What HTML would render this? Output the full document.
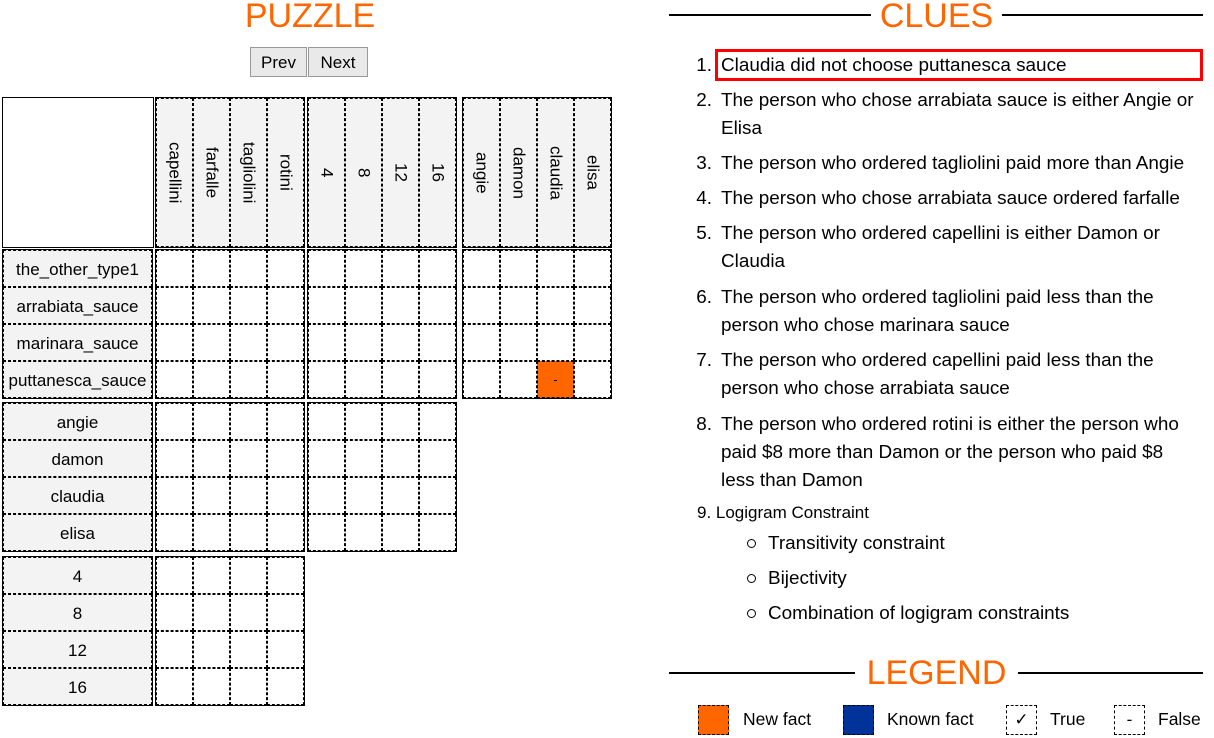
<!DOCTYPE html>
<html><head><meta charset="utf-8"><style>
*{box-sizing:border-box;margin:0;padding:0}
body{width:1214px;height:738px;background:#fff;font-family:"Liberation Sans",sans-serif;color:#000;position:relative;overflow:hidden}
.a{position:absolute}
.h{color:#ff6600;font-size:34px;text-align:center}
.blk{position:absolute;border:1px solid #000;display:flex;flex-wrap:wrap;width:150px;height:150px}
.blk i{display:block;width:37px;height:37px;border:1px dashed #000;font-style:normal;text-align:center;line-height:35px;font-size:13px}
.lbl{position:absolute;border:1px solid #000;width:151px;height:150px}
.lbl div{height:37px;border:1px dashed #000;background:#f3f3f3;text-align:center;line-height:37px;font-size:17px}
.hd{position:absolute;border:1px solid #000;width:150px;height:151px;display:flex}
.hd div{width:37px;height:149px;border:1px dashed #000;background:#f3f3f3;writing-mode:vertical-rl;display:flex;align-items:center;justify-content:center;font-size:17px}
.btn{position:absolute;top:47px;height:30px;border:1px solid #999;background:#e9e9e9;font-size:17px;line-height:30px;text-align:center}
.line{position:absolute;height:2px;background:#000}
.c{position:absolute;left:721px;font-size:18.9px;line-height:28px;width:475px}
.n{position:absolute;left:690px;width:22px;text-align:right;font-size:18.9px;line-height:28px}
.sb{position:absolute;left:768px;font-size:18.9px}
.dot{position:absolute;left:747px;width:9px;height:9px;border:1px solid #000;border-radius:50%}
.lg{position:absolute;top:705px;width:31px;height:30px;border:1px dashed #000;text-align:center;line-height:28px;font-size:17px}
.lt{position:absolute;top:709px;font-size:17.5px}
</style></head><body>
<div class="a h" style="left:200px;top:-3px;width:220px">PUZZLE</div>
<div class="btn" style="left:250px;width:57px">Prev</div>
<div class="btn" style="left:308px;width:60px">Next</div>

<div class="a" style="left:2px;top:97px;width:152px;height:151px;border:1px solid #000"></div>
<div class="hd" style="left:155px;top:97px"><div>capellini</div><div>farfalle</div><div>tagliolini</div><div>rotini</div></div>
<div class="hd" style="left:307px;top:97px"><div>4</div><div>8</div><div>12</div><div>16</div></div>
<div class="hd" style="left:462px;top:97px"><div>angie</div><div>damon</div><div>claudia</div><div>elisa</div></div>

<div class="lbl" style="left:2px;top:249px"><div>the_other_type1</div><div>arrabiata_sauce</div><div>marinara_sauce</div><div>puttanesca_sauce</div></div>
<div class="lbl" style="left:2px;top:402px"><div>angie</div><div>damon</div><div>claudia</div><div>elisa</div></div>
<div class="lbl" style="left:2px;top:556px"><div>4</div><div>8</div><div>12</div><div>16</div></div>

<div class="blk" style="left:155px;top:249px"><i></i><i></i><i></i><i></i><i></i><i></i><i></i><i></i><i></i><i></i><i></i><i></i><i></i><i></i><i></i><i></i></div>
<div class="blk" style="left:307px;top:249px"><i></i><i></i><i></i><i></i><i></i><i></i><i></i><i></i><i></i><i></i><i></i><i></i><i></i><i></i><i></i><i></i></div>
<div class="blk" style="left:462px;top:249px"><i></i><i></i><i></i><i></i><i></i><i></i><i></i><i></i><i></i><i></i><i></i><i></i><i></i><i></i><i style="background:#ff6600">-</i><i></i></div>
<div class="blk" style="left:155px;top:402px"><i></i><i></i><i></i><i></i><i></i><i></i><i></i><i></i><i></i><i></i><i></i><i></i><i></i><i></i><i></i><i></i></div>
<div class="blk" style="left:307px;top:402px"><i></i><i></i><i></i><i></i><i></i><i></i><i></i><i></i><i></i><i></i><i></i><i></i><i></i><i></i><i></i><i></i></div>
<div class="blk" style="left:155px;top:556px"><i></i><i></i><i></i><i></i><i></i><i></i><i></i><i></i><i></i><i></i><i></i><i></i><i></i><i></i><i></i><i></i></div>

<div class="line" style="left:669px;top:14px;width:202px"></div>
<div class="line" style="left:1002px;top:14px;width:201px"></div>
<div class="a h" style="left:871px;top:-3px;width:131px">CLUES</div>

<div class="a" style="left:715px;top:49px;width:488px;height:32px;border:3px solid #f00"></div>
<div class="n" style="top:52px">1.</div><div class="c" style="top:52px">Claudia did not choose puttanesca sauce</div>
<div class="n" style="top:87px">2.</div><div class="c" style="top:87px">The person who chose arrabiata sauce is either Angie or Elisa</div>
<div class="n" style="top:150px">3.</div><div class="c" style="top:150px">The person who ordered tagliolini paid more than Angie</div>
<div class="n" style="top:185px">4.</div><div class="c" style="top:185px">The person who chose arrabiata sauce ordered farfalle</div>
<div class="n" style="top:220px">5.</div><div class="c" style="top:220px">The person who ordered capellini is either Damon or Claudia</div>
<div class="n" style="top:284px">6.</div><div class="c" style="top:284px">The person who ordered tagliolini paid less than the person who chose marinara sauce</div>
<div class="n" style="top:347px">7.</div><div class="c" style="top:347px">The person who ordered capellini paid less than the person who chose arrabiata sauce</div>
<div class="n" style="top:411px">8.</div><div class="c" style="top:411px">The person who ordered rotini is either the person who paid $8 more than Damon or the person who paid $8 less than Damon</div>
<div class="a" style="left:697px;top:503px;font-size:17px">9. Logigram Constraint</div>
<div class="dot" style="top:539px"></div><div class="sb" style="top:533px">Transitivity constraint</div>
<div class="dot" style="top:574px"></div><div class="sb" style="top:568px">Bijectivity</div>
<div class="dot" style="top:609px"></div><div class="sb" style="top:603px">Combination of logigram constraints</div>

<div class="line" style="left:669px;top:672px;width:186px"></div>
<div class="line" style="left:1018px;top:672px;width:185px"></div>
<div class="a h" style="left:855px;top:654px;width:163px">LEGEND</div>

<div class="lg" style="left:698px;background:#ff6600"></div><div class="lt" style="left:743px">New fact</div>
<div class="lg" style="left:843px;background:#003399"></div><div class="lt" style="left:887px">Known fact</div>
<div class="lg" style="left:1006px">✓</div><div class="lt" style="left:1050px">True</div>
<div class="lg" style="left:1114px">-</div><div class="lt" style="left:1158px">False</div>
</body></html>
